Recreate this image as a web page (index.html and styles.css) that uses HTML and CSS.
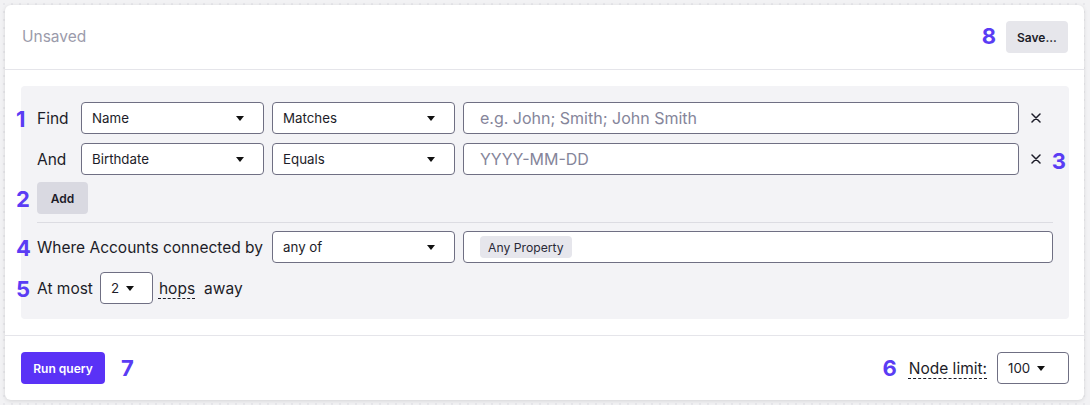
FILE: index.html
```html
<!DOCTYPE html>
<html>
<head>
<meta charset="utf-8">
<link rel="stylesheet" href="styles.css">
</head>
<body>
<div class="card">
  <header class="card-head">
    <span class="title">Unsaved</span>
    <div class="head-actions">
      <span class="num">8</span>
      <button class="btn btn-gray">Save...</button>
    </div>
  </header>
  <main class="card-body">
    <div class="panel">
      <div class="row">
        <span class="num num-left">1</span>
        <span class="label label-short">Find</span>
        <div class="select sel-wide"><span>Name</span><i class="caret"></i></div>
        <div class="select sel-wide"><span>Matches</span><i class="caret"></i></div>
        <div class="input"><span class="ph">e.g. John; Smith; John Smith</span></div>
        <span class="remove"><svg width="10" height="10" viewBox="0 0 10 10"><path d="M1 1L9 9M9 1L1 9" stroke="#1c1c28" stroke-width="1.5" stroke-linecap="round"/></svg></span>
      </div>
      <div class="row">
        <span class="label label-short">And</span>
        <div class="select sel-wide"><span>Birthdate</span><i class="caret"></i></div>
        <div class="select sel-wide"><span>Equals</span><i class="caret"></i></div>
        <div class="input"><span class="ph">YYYY-MM-DD</span></div>
        <span class="remove"><svg width="10" height="10" viewBox="0 0 10 10"><path d="M1 1L9 9M9 1L1 9" stroke="#1c1c28" stroke-width="1.5" stroke-linecap="round"/></svg></span>
        <span class="num num-right">3</span>
      </div>
      <div class="row row-add">
        <span class="num num-left">2</span>
        <button class="btn btn-add">Add</button>
      </div>
      <hr class="sep">
      <div class="row">
        <span class="num num-left">4</span>
        <span class="label label-long">Where Accounts connected by</span>
        <div class="select sel-wide"><span>any of</span><i class="caret"></i></div>
        <div class="input input-end"><span class="chip">Any Property</span></div>
      </div>
      <div class="row">
        <span class="num num-left">5</span>
        <span class="label">At most</span>
        <div class="select sel-hops"><span>2</span><i class="caret caret-inline"></i></div>
        <span class="label dashed hops">hops</span>
        <span class="label away">away</span>
      </div>
    </div>
  </main>
  <footer class="card-foot">
    <div class="foot-left">
      <button class="btn btn-primary">Run query</button>
      <span class="num">7</span>
    </div>
    <div class="foot-right">
      <span class="num">6</span>
      <span class="label dashed">Node limit:</span>
      <div class="select sel-limit"><span>100</span><i class="caret caret-inline"></i></div>
    </div>
  </footer>
</div>
</body>
</html>
```

FILE: styles.css
```css
* { box-sizing: border-box; }
html, body { margin: 0; padding: 0; }
body {
  width: 1090px;
  height: 405px;
  overflow: hidden;
  background-color: #f2f2f4;
  background-image: radial-gradient(circle, #e7e7eb 1px, transparent 1.2px);
  background-size: 8px 8px;
  font-family: Inter, "Noto Sans", sans-serif;
  color: #1c1c28;
  padding: 5px 6px 0 5px;
}
.card {
  width: 1079px;
  height: 395px;
  background: #fff;
  border-radius: 6px;
  box-shadow: 0 1px 4px rgba(0,0,0,0.12);
  display: flex;
  flex-direction: column;
}
.card-head {
  height: 65px;
  border-bottom: 1px solid #e5e5ea;
  display: flex;
  align-items: center;
  justify-content: space-between;
  padding: 0 16px 2px 17px;
}
.title { font-size: 15.5px; color: #9b9bab; }
.head-actions { display: flex; align-items: center; gap: 10px; }
.num {
  font-weight: 700;
  font-size: 22px;
  color: #5a3cf4;
  line-height: 1;
}
.btn {
  font-family: Inter, "Noto Sans", sans-serif;
  font-weight: 600;
  font-size: 12px;
  border: none;
  border-radius: 4px;
  height: 32px;
  padding: 0;
  cursor: pointer;
}
.head-actions .btn { margin-top: 2px; }
.btn-gray { background: #e6e6eb; color: #1c1c28; width: 62px; }
.btn-add { background: #d9d9e1; color: #1c1c28; width: 51px; }
.btn-primary { background: #5a32f6; color: #fff; width: 84px; }
.card-body { padding: 16px 15px 16px 16px; border-bottom: 1px solid #e5e5ea; }
.panel {
  background: #f3f3f6;
  border-radius: 4px;
  height: 233px;
  padding: 16px 16px 0 16px;
  display: flex;
  flex-direction: column;
}
.row {
  position: relative;
  display: flex;
  align-items: center;
  height: 32px;
  flex-shrink: 0;
}
.row + .row { margin-top: 9px; }
.row.row-add { margin-top: 7px; }
.label { font-size: 15.5px; color: #1c1c28; white-space: nowrap; }
.label-short { width: 44px; }
.label-long { width: 235px; }
.select {
  height: 32px;
  background: #fff;
  border: 1px solid #6f6f83;
  border-radius: 4px;
  display: flex;
  align-items: center;
  justify-content: space-between;
  padding: 0 19px 0 10px;
  font-size: 13.3px;
  color: #1c1c28;
  flex-shrink: 0;
}
.sel-wide { width: 183px; margin-right: 8px; }
.caret {
  display: block;
  width: 0; height: 0;
  border-left: 4.5px solid transparent;
  border-right: 4.5px solid transparent;
  border-top: 5px solid #111;
}
.caret-inline { margin-left: 7px; }
.sel-hops { width: 53px; justify-content: flex-start; margin-left: 7px; margin-right: 6px; padding-left: 10px; }
.sel-limit { width: 72px; justify-content: flex-start; padding-left: 10px; }
.input {
  flex: 1;
  height: 32px;
  background: #fff;
  border: 1px solid #6f6f83;
  border-radius: 4px;
  display: flex;
  align-items: center;
  padding-left: 16px;
}
.ph { font-size: 16px; color: #85859a; }
.chip {
  background: #e6e6ec;
  border-radius: 4px;
  height: 22px;
  padding: 0 8px;
  display: flex;
  align-items: center;
  font-size: 12.2px;
  color: #2a2a38;
}
.remove { width: 34px; display: flex; justify-content: center; align-items: center; flex-shrink: 0; }
.num-left { position: absolute; left: -21px; top: 6px; }
.num-right { position: absolute; right: -13px; top: 7px; }
.sep { border: none; border-top: 1px solid #dcdce2; margin: 8px 0 0 0; height: 0; flex-shrink: 0; }
.sep + .row { margin-top: 8px; }
.row + .row + .row + .row + .row + .row { margin-top: 8px; }
.dashed { text-decoration: underline dashed #1c1c28 1px; text-underline-offset: 4px; }
.away { margin-left: 9px; }
.card-foot {
  flex: 1;
  display: flex;
  align-items: center;
  justify-content: space-between;
  padding: 0 15px 0 16px;
}
.foot-left { display: flex; align-items: center; gap: 16px; }
.foot-right { display: flex; align-items: center; gap: 12px; }
.foot-right .label { margin-right: -2px; }
```
